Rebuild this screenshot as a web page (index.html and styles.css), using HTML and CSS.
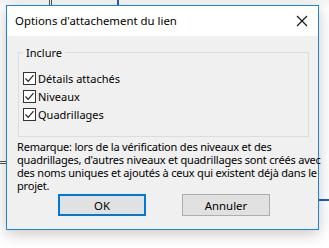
FILE: index.html
```html
<!DOCTYPE html>
<html lang="fr">
<head>
<meta charset="utf-8">
<title>Options d'attachement du lien</title>
<link rel="stylesheet" href="styles.css">
</head>
<body>
<div class="desk">
  <span class="bg-line bg-v1"></span>
  <span class="bg-line bg-v2"></span>
  <span class="bg-line bg-v3"></span>
  <span class="bg-line bg-h1"></span>
  <span class="bg-line bg-h2"></span>
  <div class="dialog">
    <div class="titlebar">
      <span class="title">Options d'attachement du lien</span>
      <svg class="close" width="12" height="12" viewBox="0 0 12 12"><path d="M1 1 L11 11 M11 1 L1 11" stroke="#111" stroke-width="1.1" fill="none"/></svg>
    </div>
    <div class="body">
      <fieldset class="group">
        <legend>Inclure</legend>
        <label class="check"><span class="box"><svg width="11" height="11" viewBox="0 0 11 11"><path d="M1.5 5.5 L4.2 8.3 L9.5 2.2" stroke="#222" stroke-width="1.2" fill="none"/></svg></span>Détails attachés</label>
        <label class="check"><span class="box"><svg width="11" height="11" viewBox="0 0 11 11"><path d="M1.5 5.5 L4.2 8.3 L9.5 2.2" stroke="#222" stroke-width="1.2" fill="none"/></svg></span>Niveaux</label>
        <label class="check"><span class="box"><svg width="11" height="11" viewBox="0 0 11 11"><path d="M1.5 5.5 L4.2 8.3 L9.5 2.2" stroke="#222" stroke-width="1.2" fill="none"/></svg></span>Quadrillages</label>
      </fieldset>
      <p class="note">Remarque: lors de la vérification des niveaux et des<br>quadrillages, d'autres niveaux et quadrillages sont créés avec<br>des noms uniques et ajoutés à ceux qui existent déjà dans le<br>projet.</p>
      <div class="buttons">
        <button class="btn btn-default">OK</button>
        <button class="btn">Annuler</button>
      </div>
    </div>
  </div>
</div>
</body>
</html>
```
FILE: styles.css
```css
html, body {
  margin: 0;
  padding: 0;
  background: #ffffff;
}
body {
  font-family: "Noto Sans", "Open Sans", sans-serif;
  font-size: 11px;
  color: #000;
}
.desk {
  position: relative;
  width: 329px;
  height: 248px;
  overflow: hidden;
  padding: 5px 0 0 6px;
  box-sizing: border-box;
  background: linear-gradient(#f4f4f4, #ffffff 8px);
}
.bg-line {
  position: absolute;
  display: block;
}
.bg-v1 { left: 49px; top: 0; width: 1px; height: 5px; background: #555; }
.bg-v2 { left: 51px; top: 0; width: 1px; height: 5px; background: #555; }
.bg-v3 { left: 117px; top: 0; width: 2px; height: 5px; background: #2a5cb8; }
.bg-h1 { left: 0; top: 161px; width: 6px; height: 1px; background: #555; box-shadow: 0 2px 0 #555; }
.bg-h2 { left: 319px; top: 199px; width: 10px; height: 2px; background: #2a5cb8; }
.dialog {
  position: relative;
  width: 313px;
  height: 225px;
  box-sizing: border-box;
  border: 1px solid #1c85d8;
  background: #f0f0f0;
  box-shadow: 0 4px 14px rgba(0, 0, 0, 0.22);
  display: flex;
  flex-direction: column;
}
.titlebar {
  height: 30px;
  background: #ffffff;
  display: flex;
  align-items: center;
  justify-content: space-between;
  padding: 0 10px 0 8px;
  flex-shrink: 0;
}
.title {
  font-size: 11.4px;
  color: #000;
  margin-top: -1px;
}
.close {
  display: block;
  margin-top: -1px;
}
.body {
  flex: 1;
  padding: 9px 9px 0 11px;
}
.group {
  margin: 0;
  padding: 9px 0 0 4px;
  border: 1px solid #dcdcdc;
  min-width: 0;
  height: 92px;
  box-sizing: border-box;
}
.group legend {
  padding: 0 3px;
  line-height: 15px;
  color: #000;
}
.check {
  display: flex;
  align-items: center;
  height: 18px;
  color: #000;
}
.box {
  width: 13px;
  height: 13px;
  box-sizing: border-box;
  border: 1px solid #333;
  background: #fff;
  margin-right: 2px;
  display: flex;
  align-items: center;
  justify-content: center;
}
.box svg { display: block; }
.note {
  margin: 3px 0 0 -1px;
  line-height: 13px;
  white-space: nowrap;
  letter-spacing: -0.2px;
}
.buttons {
  display: flex;
  gap: 36px;
  padding-left: 40px;
  margin-top: 2px;
}
.btn {
  width: 88px;
  height: 22px;
  box-sizing: border-box;
  border: 1px solid #adadad;
  background: #e1e1e1;
  font-family: inherit;
  font-size: 11.4px;
  color: #000;
  padding: 0;
}
.btn-default {
  border: 2px solid #0078d7;
}
```
